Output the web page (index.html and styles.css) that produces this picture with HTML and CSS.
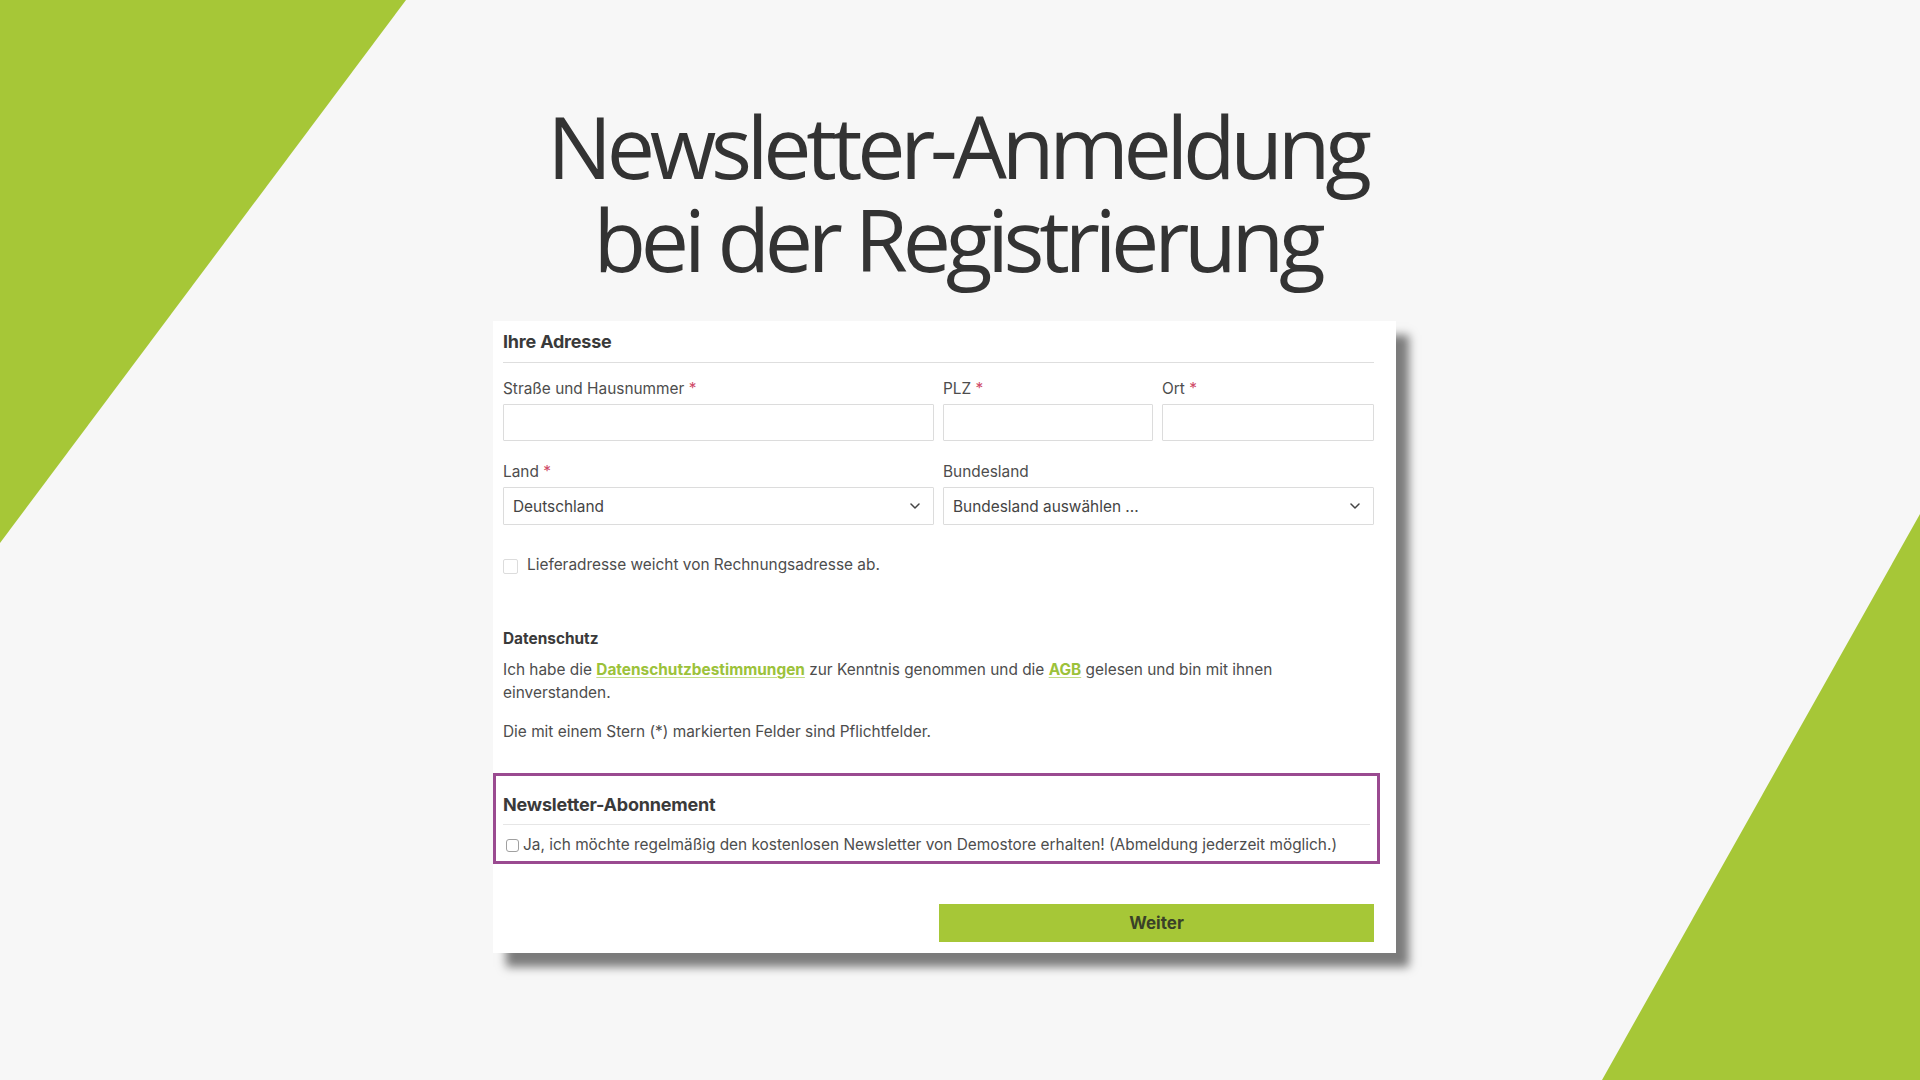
FILE: index.html
```html
<!DOCTYPE html>
<html lang="de">
<head>
<meta charset="utf-8">
<title>Newsletter-Anmeldung bei der Registrierung</title>
<link rel="stylesheet" href="styles.css">
</head>
<body>
<div class="deco deco-left"></div>
<div class="deco deco-right"></div>
<main class="page">
  <h1 class="title">Newsletter-Anmeldung<br>bei der Registrierung</h1>
  <section class="card">
    <h2 class="section-head">Ihre Adresse</h2>
    <div class="row row-three">
      <div class="field">
        <label class="label">Straße und Hausnummer <span class="req">*</span></label>
        <div class="input"></div>
      </div>
      <div class="field">
        <label class="label">PLZ <span class="req">*</span></label>
        <div class="input"></div>
      </div>
      <div class="field">
        <label class="label">Ort <span class="req">*</span></label>
        <div class="input"></div>
      </div>
    </div>
    <div class="row row-two">
      <div class="field">
        <label class="label">Land <span class="req">*</span></label>
        <div class="select"><span>Deutschland</span>
          <svg class="chev" viewBox="0 0 10 6" width="10" height="6"><path d="M1 1l4 4 4-4" fill="none" stroke="#444" stroke-width="1.5" stroke-linecap="round" stroke-linejoin="round"/></svg>
        </div>
      </div>
      <div class="field">
        <label class="label">Bundesland</label>
        <div class="select"><span>Bundesland auswählen ...</span>
          <svg class="chev" viewBox="0 0 10 6" width="10" height="6"><path d="M1 1l4 4 4-4" fill="none" stroke="#444" stroke-width="1.5" stroke-linecap="round" stroke-linejoin="round"/></svg>
        </div>
      </div>
    </div>
    <div class="check-row">
      <span class="box"></span>
      <span>Lieferadresse weicht von Rechnungsadresse ab.</span>
    </div>
    <h3 class="sub-head">Datenschutz</h3>
    <p class="text text-first">Ich habe die <a class="link">Datenschutzbestimmungen</a> zur Kenntnis genommen und die <a class="link">AGB</a> gelesen und bin mit ihnen einverstanden.</p>
    <p class="text text-second">Die mit einem Stern (*) markierten Felder sind Pflichtfelder.</p>
    <div class="newsletter">
      <h2 class="section-head news-head">Newsletter-Abonnement</h2>
      <div class="news-row">
        <span class="box box-small"></span>
        <span>Ja, ich möchte regelmäßig den kostenlosen Newsletter von Demostore erhalten! (Abmeldung jederzeit möglich.)</span>
      </div>
    </div>
    <div class="actions">
      <button class="btn">Weiter</button>
    </div>
  </section>
</main>
</body>
</html>
```
FILE: styles.css
```css
html, body {
  margin: 0;
  padding: 0;
}
body {
  width: 1920px;
  height: 1080px;
  background: #f7f7f7;
  position: relative;
  overflow: hidden;
  font-family: Inter, "Liberation Sans", sans-serif;
  color: #4a4a4a;
}
.deco {
  position: absolute;
  background: #a6c737;
}
.deco-left {
  left: 0;
  top: 0;
  width: 406px;
  height: 543px;
  clip-path: polygon(0 0, 100% 0, 0 100%);
}
.deco-right {
  right: 0;
  bottom: 0;
  width: 318px;
  height: 566px;
  clip-path: polygon(100% 0, 100% 100%, 0 100%);
}
.page {
  position: relative;
  display: flex;
  flex-direction: column;
  align-items: center;
  padding-top: 99px;
}
.title {
  margin: 0 6px 0 0;
  font-family: "Open Sans", sans-serif;
  font-weight: 400;
  font-size: 86px;
  line-height: 93px;
  letter-spacing: -5.25px;
  color: #333333;
  text-align: center;
}
.card {
  margin-top: 36px;
  margin-right: 31px;
  width: 903px;
  box-sizing: border-box;
  padding: 10px 22px 11px 10px;
  background: #ffffff;
  box-shadow: 13px 14px 9px rgba(0, 0, 0, 0.5);
}
.section-head {
  margin: 0;
  font-size: 18px;
  line-height: 22px;
  font-weight: 700;
  color: #3a3a3a;
  letter-spacing: -0.2px;
  padding-bottom: 9px;
  border-bottom: 1px solid #dedede;
}
.row {
  display: grid;
  column-gap: 9px;
}
.row-three {
  margin-top: 16px;
  grid-template-columns: 431px 210px 1fr;
}
.row-two {
  margin-top: 21px;
  grid-template-columns: 1fr 1fr;
}
.field {
  display: flex;
  flex-direction: column;
}
.label {
  font-size: 15.4px;
  line-height: 20px;
  color: #4d4d4d;
  margin-bottom: 5px;
}
.req {
  color: #cf4a68;
}
.input {
  height: 37px;
  box-sizing: border-box;
  border: 1px solid #dcdcdc;
  border-radius: 1px;
  background: #fff;
}
.select {
  height: 38px;
  box-sizing: border-box;
  border: 1px solid #dcdcdc;
  border-radius: 1px;
  display: flex;
  align-items: center;
  justify-content: space-between;
  padding: 0 13px 0 9px;
  font-size: 15.4px;
  color: #444;
}
.chev {
  display: block;
}
.check-row {
  margin-top: 30px;
  display: flex;
  align-items: center;
  gap: 9px;
  font-size: 15.4px;
  line-height: 20px;
  color: #4d4d4d;
}
.box {
  width: 15px;
  height: 15px;
  box-sizing: border-box;
  border: 1px solid #dcdcdc;
  border-radius: 2px;
  background: #fff;
  flex: none;
  margin-top: 2px;
}
.sub-head {
  margin: 54px 0 0;
  font-size: 15.4px;
  line-height: 20px;
  font-weight: 700;
  color: #3a3a3a;
}
.text {
  margin: 0;
  font-size: 15.4px;
  line-height: 23px;
  color: #4d4d4d;
}
.text-first {
  margin-top: 9px;
}
.text-second {
  margin-top: 16px;
}
.link {
  color: #9cc23a;
  font-weight: 700;
  text-decoration: underline;
  text-decoration-color: #c3dc86;
  text-underline-offset: 2px;
}
.newsletter {
  margin: 30px -6px 0 -10px;
  border: 3px solid #9a4a90;
  padding: 18px 7px 6px 7px;
}
.news-head {
  padding-bottom: 8px;
  border-bottom-color: #e6e6e6;
}
.news-row {
  margin-top: 10px;
  display: flex;
  align-items: center;
  gap: 4px;
  font-size: 15.4px;
  line-height: 20px;
  color: #4d4d4d;
  white-space: nowrap;
}
.box-small {
  width: 13px;
  height: 13px;
  margin-left: 3px;
  border-color: #a0a0a0;
  border-radius: 3px;
  margin-top: 1px;
}
.actions {
  margin-top: 40px;
  display: flex;
  justify-content: flex-end;
}
.btn {
  width: 435px;
  height: 38px;
  border: none;
  border-radius: 0;
  background: #a6c737;
  font-family: Inter, "Liberation Sans", sans-serif;
  font-weight: 700;
  font-size: 17px;
  color: #3a4128;
  padding: 0;
}
```
